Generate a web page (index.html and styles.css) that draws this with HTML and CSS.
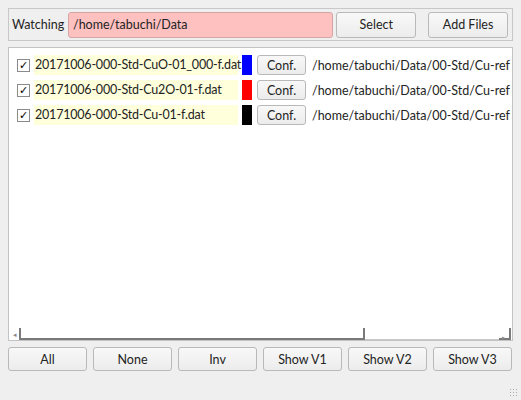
FILE: index.html
```html
<!DOCTYPE html>
<html lang="en">
<head>
    <meta charset="UTF-8">
    <title>Watcher</title>
    <link rel="stylesheet" href="styles.css">
</head>
<body>
    <div class="window">
        <div class="watch-bar">
            <span class="watch-label">Watching</span>
            <div class="watch-path">/home/tabuchi/Data</div>
            <button class="btn select-btn">Select</button>
            <button class="btn add-btn">Add Files</button>
        </div>

        <div class="file-list">
            <div class="rows" id="rows"></div>
            <div class="hscroll">
                <span class="arrow left">&#9666;</span>
                <div class="handle"></div>
                <div class="track"></div>
                <div class="corner"><span class="arrow right">&#9656;</span></div>
            </div>
        </div>

        <div class="actions">
            <button class="btn">All</button>
            <button class="btn">None</button>
            <button class="btn">Inv</button>
            <button class="btn">Show V1</button>
            <button class="btn">Show V2</button>
            <button class="btn">Show V3</button>
        </div>
        <div class="grip"></div>
    </div>

    <script>
        const files = [
            { name: "20171006-000-Std-CuO-01_000-f.dat", color: "#0000ff" },
            { name: "20171006-000-Std-Cu2O-01-f.dat", color: "#ff0000" },
            { name: "20171006-000-Std-Cu-01-f.dat", color: "#000000" }
        ];
        const dir = "/home/tabuchi/Data/00-Std/Cu-ref";

        const rows = document.getElementById("rows");
        files.forEach(f => {
            const row = document.createElement("div");
            row.className = "row";
            row.innerHTML = `
                <span class="check">&#10003;</span>
                <span class="name">${f.name}</span>
                <span class="swatch" style="background:${f.color}"></span>
                <button class="btn conf-btn">Conf.</button>
                <span class="dir">${dir}</span>
            `;
            rows.appendChild(row);
        });
    </script>
</body>
</html>
```

FILE: styles.css
```css
body {
    margin: 0;
    background: #efefef;
    font-family: Lato, "Open Sans", sans-serif;
    font-size: 12.5px;
    color: #232323;
}
.window {
    width: 521px;
    height: 400px;
    box-sizing: border-box;
    padding: 8px;
    position: relative;
}

/* Boutons génériques */
.btn {
    font-family: inherit;
    font-size: 12.5px;
    color: #232323;
    background: linear-gradient(#f8f8f8, #ececec);
    border: 1px solid #b9b9b9;
    border-radius: 3px;
    padding: 0;
    height: 24px;
}

/* Barre du dossier surveillé */
.watch-bar {
    display: flex;
    align-items: center;
    height: 33px;
    box-sizing: border-box;
    border: 1px solid #c8c8c8;
    padding: 0 4px 0 3px;
}
.watch-label {
    width: 51px;
    margin-right: 5px;
    flex: none;
}
.watch-path {
    width: 266px;
    height: 26px;
    box-sizing: border-box;
    background: #ffc0c0;
    border: 1px solid #d3a6a6;
    border-radius: 3px;
    padding: 0 4px;
    line-height: 24px;
}
.select-btn {
    width: 80px;
    height: 26px;
    margin-left: 3px;
}
.add-btn {
    width: 80px;
    height: 26px;
    margin-left: 12px;
}

/* Liste des fichiers */
.file-list {
    margin-top: 6px;
    height: 294px;
    box-sizing: border-box;
    border: 1px solid #c3c3c3;
    background: #fff;
    display: flex;
    flex-direction: column;
}
.rows {
    flex: 1;
    padding: 7px 0 0 8px;
    overflow: hidden;
}
.row {
    display: flex;
    align-items: center;
    height: 20px;
    margin-bottom: 5px;
    white-space: nowrap;
}
.check {
    width: 11px;
    height: 11px;
    border: 1px solid #8a8a8a;
    background: #fff;
    font-size: 11px;
    font-weight: bold;
    line-height: 11px;
    text-align: center;
    font-family: "DejaVu Sans", sans-serif;
    color: #000;
    flex: none;
}
.name {
    width: 203px;
    margin-left: 4px;
    padding-left: 1px;
    background: #ffffdc;
    line-height: 20px;
    letter-spacing: -0.2px;
    flex: none;
}
.swatch {
    width: 10px;
    height: 20px;
    margin-left: 4px;
    flex: none;
}
.conf-btn {
    width: 49px;
    height: 20px;
    margin-left: 5px;
    flex: none;
}
.dir {
    margin-left: 6px;
}

/* Barre de défilement horizontale */
.hscroll {
    height: 12px;
    display: flex;
    align-items: stretch;
    padding: 0 1px 0 4px;
}
.arrow {
    font-size: 7px;
    color: #888;
    line-height: 12px;
}
.handle {
    width: 342px;
    border: 2px solid #7a7a7a;
    border-top: none;
    margin-left: 2px;
}
.track {
    flex: 1;
    border-bottom: 1px solid #c8c8c8;
}
.corner {
    width: 10px;
    border-right: 2px solid #7a7a7a;
    border-bottom: 2px solid #7a7a7a;
    text-align: center;
}

/* Boutons du bas */
.actions {
    display: flex;
    gap: 6px;
    margin-top: 6px;
}
.actions .btn {
    width: 79px;
}

.grip {
    position: absolute;
    right: 2px;
    bottom: 2px;
    width: 10px;
    height: 10px;
    background: radial-gradient(circle, #aaa 0.8px, transparent 1px) 0 0 / 3px 3px;
}
```
